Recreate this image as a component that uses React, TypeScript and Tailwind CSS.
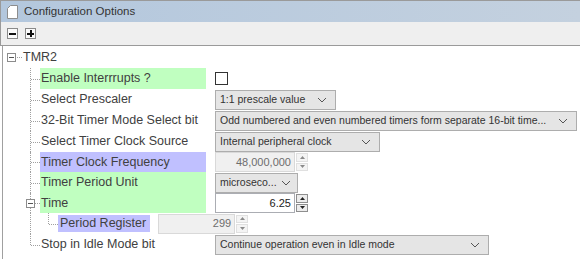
const labelFont = "[font-family:'Liberation_Sans',Arial,sans-serif]";

function Chevron() {
  return (
    <svg width="10" height="6" viewBox="0 0 10 6" className="shrink-0">
      <path d="M1 1 L5 5 L9 1" fill="none" stroke="#555" strokeWidth="1" />
    </svg>
  );
}

function Select({ text, w }: { text: string; w: number }) {
  return (
    <div
      className="flex h-[20px] items-center justify-between gap-[4px] border border-[#adadad] bg-[#e5e5e5] pl-[4px] pr-[8px] text-[10.5px] text-[#333]"
      style={{ width: w }}
    >
      <span className="whitespace-nowrap">{text}</span>
      <Chevron />
    </div>
  );
}

function Arrow({ up, dark }: { up?: boolean; dark?: boolean }) {
  return (
    <svg width="5" height="3" viewBox="0 0 5 3">
      <path d={up ? 'M0 3 L2.5 0 L5 3 Z' : 'M0 0 L2.5 3 L5 0 Z'} fill={dark ? '#222' : '#8a8a8a'} />
    </svg>
  );
}

function Spinner({ value, w, disabled }: { value: string; w: number; disabled?: boolean }) {
  return (
    <div className="flex h-[20px]" style={{ width: w }}>
      <div
        className={`flex flex-1 items-center justify-end border pr-[3px] text-[11px] ${
          disabled ? 'border-[#d9d9d9] bg-[#f0f0f0] text-[#6d6d6d]' : 'border-[#abadb3] bg-white text-[#222]'
        }`}
      >
        {value}
      </div>
      <div className="flex w-[13px] flex-col gap-px bg-white py-[1px] pl-[1px]">
        <div
          className={`flex flex-1 items-center justify-center border ${
            disabled ? 'border-[#e0e0e0] bg-[#f4f4f4]' : 'border-[#8e8e8e] bg-[#ececec]'
          }`}
        >
          <Arrow up dark={!disabled} />
        </div>
        <div
          className={`flex flex-1 items-center justify-center border ${
            disabled ? 'border-[#e0e0e0] bg-[#f4f4f4]' : 'border-[#8e8e8e] bg-[#ececec]'
          }`}
        >
          <Arrow dark={!disabled} />
        </div>
      </div>
    </div>
  );
}

function ExpandBox() {
  return (
    <div className="flex h-[9px] w-[9px] items-center justify-center border border-[#8c8c8c] bg-white">
      <div className="h-px w-[5px] bg-[#555]" />
    </div>
  );
}

// one child row of TMR2: vertical dotted trunk + branch + label + control
function Row({
  label,
  h,
  bg,
  last,
  children,
}: {
  label: string;
  h: number;
  bg?: string;
  last?: boolean;
  children?: React.ReactNode;
}) {
  return (
    <div className="flex" style={{ height: h }}>
      <div className="w-[27px] shrink-0" />
      <div className="relative w-[10px] shrink-0">
        <div
          className={`absolute left-0 top-0 border-l border-dotted border-[#a0a0a0] ${last ? 'h-1/2' : 'h-full'}`}
        />
        <div className="absolute left-px top-1/2 w-[9px] border-t border-dotted border-[#a0a0a0]" />
      </div>
      <div className={`flex w-[166px] shrink-0 items-center pl-[1px] ${bg ?? ''}`}>{label}</div>
      <div className="ml-[9px] flex items-center">{children}</div>
    </div>
  );
}

export default function App() {
  return (
    <div className={`h-[259px] w-[580px] overflow-hidden bg-white ${labelFont}`}>
      {/* title bar */}
      <div className="flex h-[22px] items-center border-l border-t border-[#9a9a9a] bg-gradient-to-r from-[#b3c7dd] to-[#c4d1df] pl-[6px]">
        <svg width="11" height="14" viewBox="0 0 11 14">
          <path d="M3.5 0.5 H10.5 V13.5 H0.5 V3.5 Z" fill="#fff" stroke="#8d8d8d" />
        </svg>
        <span className="ml-[6px] text-[11.5px] text-[#333]">Configuration Options</span>
      </div>
      {/* toolbar */}
      <div className="flex h-[24px] items-center gap-[7px] border-b border-l border-[#9a9a9a] bg-[#efefef] pl-[6px]">
        <div className="flex h-[11px] w-[11px] items-center justify-center border border-[#8a8a8a] bg-[#fafafa]">
          <div className="h-[2px] w-[7px] bg-[#111]" />
        </div>
        <div className="relative flex h-[11px] w-[11px] items-center justify-center border border-[#8a8a8a] bg-[#fafafa]">
          <div className="h-[2px] w-[7px] bg-[#111]" />
          <div className="absolute h-[7px] w-[2px] bg-[#111]" />
        </div>
      </div>
      {/* tree */}
      <div className="ml-[2px] h-full border-l border-[#a0a0a0] pt-px text-[12.5px] text-[#404040]">
        <div className="flex h-[21px] items-center pl-[4px]">
          <ExpandBox />
          <div className="ml-[1px] w-[5px] border-t border-dotted border-[#a0a0a0]" />
          <span className="ml-[1px]">TMR2</span>
        </div>
        <Row label="Enable Interrrupts ?" h={21} bg="bg-[#c0ffc0]">
          <div className="h-[13px] w-[13px] border border-[#333] bg-white" />
        </Row>
        <Row label="Select Prescaler" h={21}>
          <Select text="1:1 prescale value" w={121} />
        </Row>
        <Row label="32-Bit Timer Mode Select bit" h={21}>
          <Select text="Odd numbered and even numbered timers form separate 16-bit time..." w={362} />
        </Row>
        <Row label="Select Timer Clock Source" h={21}>
          <Select text="Internal peripheral clock" w={165} />
        </Row>
        <Row label="Timer Clock Frequency" h={20} bg="bg-[#c0c0ff]">
          <Spinner value="48,000,000" w={93} disabled />
        </Row>
        <Row label="Timer Period Unit" h={21} bg="bg-[#c0ffc0]">
          <Select text="microseco..." w={83} />
        </Row>
        {/* Time row with its own expander over the trunk */}
        <div className="flex h-[20px]">
          <div className="w-[23px] shrink-0" />
          <div className="relative w-[14px] shrink-0">
            <div className="absolute left-[4px] top-0 h-full border-l border-dotted border-[#a0a0a0]" />
            <div className="absolute left-0 top-[6px]">
              <ExpandBox />
            </div>
            <div className="absolute left-[9px] top-1/2 w-[5px] border-t border-dotted border-[#a0a0a0]" />
          </div>
          <div className="flex w-[166px] shrink-0 items-center bg-[#c0ffc0] pl-[1px]">Time</div>
          <div className="ml-[9px] flex items-center">
            <Spinner value="6.25" w={93} />
          </div>
        </div>
        {/* Period Register, second level */}
        <div className="flex h-[21px]">
          <div className="w-[27px] shrink-0" />
          <div className="w-[18px] shrink-0 border-l border-dotted border-[#a0a0a0]" />
          <div className="relative w-[10px] shrink-0">
            <div className="absolute left-0 top-0 h-1/2 border-l border-dotted border-[#a0a0a0]" />
            <div className="absolute left-px top-1/2 w-[9px] border-t border-dotted border-[#a0a0a0]" />
          </div>
          <div className="flex items-center">
            <div className="flex h-[17px] items-center bg-[#c0c0ff] pl-[2px] pr-[4px]">Period Register</div>
            <div className="ml-[8px]">
              <Spinner value="299" w={90} disabled />
            </div>
          </div>
        </div>
        <Row label="Stop in Idle Mode bit" h={21} last>
          <Select text="Continue operation even in Idle mode" w={274} />
        </Row>
      </div>
    </div>
  );
}
